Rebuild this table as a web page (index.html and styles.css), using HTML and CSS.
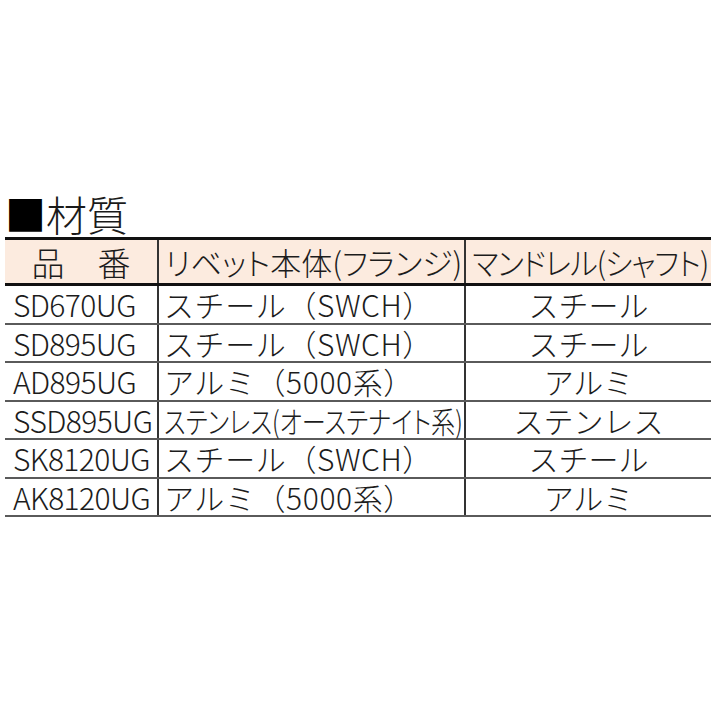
FILE: index.html
```html
<!DOCTYPE html>
<html lang="ja">
<head>
<meta charset="utf-8">
<title>材質</title>
<link rel="stylesheet" href="styles.css">
</head>
<body>
<div class="page">
  <h2 class="title"><span class="mark">■</span>材質</h2>
  <table class="spec">
    <colgroup>
      <col class="w1">
      <col class="w2">
      <col class="w3">
    </colgroup>
    <thead>
      <tr>
        <th class="c1">品　番</th>
        <th class="c2">リベット本体(フランジ)</th>
        <th class="c3"><span class="sq sq-h">マンドレル(シャフト)</span></th>
      </tr>
    </thead>
    <tbody>
      <tr><td class="c1">SD670UG</td><td class="c2"><span class="sq sq-w">スチール（SWCH）</span></td><td class="c3">スチール</td></tr>
      <tr><td class="c1">SD895UG</td><td class="c2"><span class="sq sq-w">スチール（SWCH）</span></td><td class="c3">スチール</td></tr>
      <tr><td class="c1">AD895UG</td><td class="c2"><span class="sq sq-w">アルミ（5000系）</span></td><td class="c3">アルミ</td></tr>
      <tr><td class="c1">SSD895UG</td><td class="c2"><span class="sq sq-n">ステンレス(オーステナイト系)</span></td><td class="c3">ステンレス</td></tr>
      <tr><td class="c1">SK8120UG</td><td class="c2"><span class="sq sq-w">スチール（SWCH）</span></td><td class="c3">スチール</td></tr>
      <tr><td class="c1">AK8120UG</td><td class="c2"><span class="sq sq-w">アルミ（5000系）</span></td><td class="c3">アルミ</td></tr>
    </tbody>
  </table>
</div>
</body>
</html>
```
FILE: styles.css
```css
html, body {
  margin: 0;
  padding: 0;
  background: #ffffff;
}
body {
  font-family: "Noto Sans CJK JP", "Noto Sans", sans-serif;
  color: #1c1c1c;
  font-weight: 300;
}
.page {
  padding: 190px 2px 0 5px;
  display: flex;
  flex-direction: column;
}
.title {
  margin: 0;
  font-size: 41px;
  font-weight: 300;
  line-height: 46px;
  height: 47px;
  color: #1a1a1a;
}
.title .mark {
  color: #000;
}
.spec {
  width: 706px;
  table-layout: fixed;
  border-collapse: collapse;
  border-top: 3px solid #111;
}
.w1 { width: 153px; }
.w2 { width: 307px; }
.w3 { width: 246px; }
.spec th, .spec td {
  padding: 0;
  white-space: nowrap;
  overflow: visible;
  font-weight: 300;
}
.spec th {
  background: #fcebdf;
  height: 43px;
  font-size: 31px;
  line-height: 40px;
  border-bottom: 3px solid #111;
  font-feature-settings: "palt";
}
.spec td {
  height: 36.5px;
  font-size: 30px;
  line-height: 36px;
  border-bottom: 2px solid #5a5a5a;
}
.spec .c1 {
  text-align: left;
  padding-left: 8px;
  border-right: 2px solid #333;
  letter-spacing: -0.6px;
}
.spec th.c1 {
  text-align: center;
  padding-left: 0;
  font-size: 33px;
  letter-spacing: 0;
  font-feature-settings: normal;
}
.spec .c2 {
  text-align: left;
  padding-left: 5px;
  border-right: 2px solid #333;
}
.spec th.c2 {
  padding-left: 6px;
}
.spec .c3 {
  text-align: center;
}
.sq {
  display: inline-block;
  transform-origin: left center;
}
.sq-w {
  letter-spacing: 0.6px;
}
.sq-n {
  font-feature-settings: "palt";
  transform: scaleX(0.805);
}
.sq-h {
  letter-spacing: -1px;
  transform-origin: center center;
  transform: scaleX(0.95);
}
```
